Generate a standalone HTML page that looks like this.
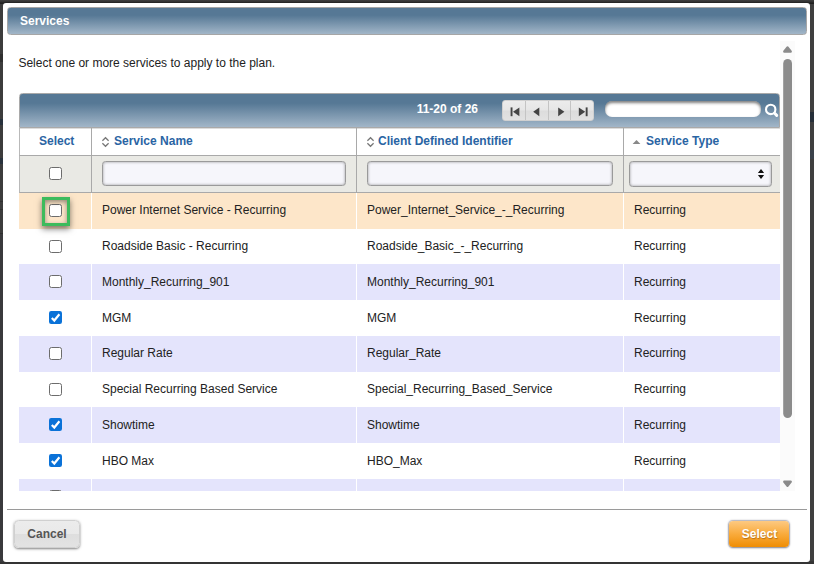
<!DOCTYPE html>
<html lang="en">
<head>
<meta charset="utf-8">
<title>Services</title>
<style>
html,body{margin:0;padding:0;}
body{width:814px;height:564px;overflow:hidden;background:#3c3c3c;position:relative;
  font-family:"Liberation Sans",Arial,sans-serif;font-size:12px;color:#222;}
.abs{position:absolute;}
#dlg{position:absolute;left:3px;top:3px;width:807px;height:559px;background:#fff;border-radius:3px;}
#title{position:absolute;left:7px;top:7px;width:798px;height:26px;border:1px solid #a6a6a6;border-radius:3.5px;
  background:linear-gradient(#567895 0%,#567895 28%,#a2b6c8 100%);}
#title span{position:absolute;left:12px;top:6px;color:#fff;font-weight:bold;font-size:12px;line-height:14px;}
#desc{position:absolute;left:18.4px;top:56px;line-height:14px;font-size:12px;color:#222;white-space:nowrap;}
#thead{position:absolute;left:19px;top:93px;width:759px;height:33px;border:1px solid #a9a9a9;border-radius:3.5px 3.5px 0 0;
  background:linear-gradient(#567895 0%,#567895 28%,#a2b6c8 100%);}
#cols{position:absolute;left:19px;top:128px;width:760px;height:27px;background:#fff;border-left:1px solid #b9b9b9;border-bottom:1px solid #a9a9a9;box-sizing:content-box;}
#filt{position:absolute;left:19px;top:156px;width:760px;height:36px;background:#e9e9e4;border-left:1px solid #b9b9b9;border-bottom:1px solid #a9a9a9;}
.vl{position:absolute;width:1px;background:#a9a9a9;top:128px;height:65px;}
.ch{position:absolute;top:134px;font-weight:bold;font-size:12px;line-height:14px;color:#2a64a3;white-space:nowrap;}
.row{position:absolute;left:19px;width:761px;}
.row .sep{position:absolute;top:0;bottom:0;width:1px;background:#fff;}
.row span{position:absolute;font-size:12px;line-height:14px;color:#222;white-space:nowrap;}
.cb{position:absolute;left:30px;width:11px;height:11px;border:1px solid #6c6c6c;border-radius:2.5px;background:#fff;}
.cb.on{border:0;width:13px;height:13px;border-radius:2.2px;background:#0a72d8;}
.cb.on svg{left:0;top:0;}
.cb svg{position:absolute;left:-1px;top:-1px;}
.inp{position:absolute;top:161px;height:23px;border:1px solid #9a9a9a;border-radius:3.5px;background:#f6f6fb;
  box-shadow:inset 0 0 3px rgba(0,0,0,.38);box-sizing:content-box;}
</style>
</head>
<body>
<div class="abs" style="left:0;top:0;width:814px;height:4px;background:linear-gradient(#3d3d3d 0,#3a3a3a 25%,#232323 70%,#1e1e1e 100%);"></div>
<div class="abs" style="left:0;top:561px;width:814px;height:3px;background:#343434;"></div>
<div class="abs" style="left:0;top:54px;width:3px;height:8px;background:#2f2f2f;"></div>
<div class="abs" style="left:0;top:119px;width:3px;height:6px;background:#27313c;"></div>
<div class="abs" style="left:0;top:158px;width:3px;height:6px;background:#29323c;"></div>
<div class="abs" style="left:0;top:201px;width:3px;height:1px;background:#303030;"></div>
<div class="abs" style="left:0;top:209px;width:3px;height:1px;background:#303030;"></div>
<div class="abs" style="left:0;top:233px;width:3px;height:1px;background:#2e2e2e;"></div>
<div class="abs" style="left:0;top:234px;width:3px;height:328px;background:#39393c;"></div>
<div class="abs" style="left:810px;top:112px;width:4px;height:10px;background:#222b36;"></div>
<div class="abs" style="left:810px;top:150px;width:4px;height:9px;background:#383f48;"></div>
<div class="abs" style="left:810px;top:4px;width:4px;height:558px;background:rgba(255,255,255,.02);"></div>
<div id="dlg"></div>
<div id="title"><span>Services</span></div>
<div id="desc">Select one or more services to apply to the plan.</div>

<div id="thead"></div>
<div id="cols"></div>
<div class="abs" style="left:20px;top:128px;width:760px;height:1px;background:#dcdcdc;"></div>
<div id="filt"></div>
<div class="vl" style="left:91px"></div>
<div class="vl" style="left:356px"></div>
<div class="vl" style="left:623px"></div>

<!-- header bar contents -->
<div class="abs" style="left:415px;top:102px;width:63px;text-align:right;color:#fff;font-weight:bold;font-size:12px;line-height:14px;white-space:nowrap;">11-20 of 26</div>
<div id="pager" class="abs" style="left:502px;top:100px;width:90px;height:19px;border:1px solid #d0d0d0;border-radius:3px;overflow:hidden;
  background:linear-gradient(#ececec 0%,#e6e6e6 49%,#dcdcdc 51%,#e2e2e2 100%);">
  <div class="abs" style="left:22px;top:0;width:1px;height:19px;background:#c4c4c4;"></div>
  <div class="abs" style="left:45px;top:0;width:1px;height:19px;background:#c4c4c4;"></div>
  <div class="abs" style="left:67px;top:0;width:1px;height:19px;background:#c4c4c4;"></div>
  <svg class="abs" style="left:0;top:0.5px" width="90" height="19" viewBox="0 0 90 19">
    <g fill="#444">
      <rect x="7.6" y="5.4" width="1.9" height="8.8"/><path d="M16.4 5.4 L16.4 14.2 L10 9.8 Z"/>
      <path d="M36.3 5.4 L36.3 14.2 L30.2 9.8 Z"/>
      <path d="M55.2 5.4 L55.2 14.2 L61.4 9.8 Z"/>
      <path d="M75.8 5.4 L75.8 14.2 L82.2 9.8 Z"/><rect x="82.7" y="5.4" width="1.9" height="8.8"/>
    </g>
  </svg>
</div>
<div class="abs" style="left:605px;top:101px;width:156px;height:16px;border-radius:7px;background:#fff;box-shadow:inset 0 2px 3px rgba(0,0,0,.5);"></div>
<svg class="abs" style="left:764px;top:102px" width="16" height="16" viewBox="0 0 16 16">
  <circle cx="6.7" cy="7.4" r="4.7" fill="none" stroke="#fff" stroke-width="2.1"/>
  <path d="M10.6 11.3 L12.7 13.4" stroke="#fff" stroke-width="3" stroke-linecap="round"/>
</svg>

<!-- column headers -->
<div class="ch" style="left:39px">Select</div>
<svg class="abs" style="left:101px;top:136px" width="9" height="12" viewBox="0 0 9 12"><path d="M1.4 4.7 L4.5 1.7 L7.6 4.7 M1.4 7.3 L4.5 10.3 L7.6 7.3" fill="none" stroke="#777" stroke-width="1.25"/></svg>
<div class="ch" style="left:114px">Service Name</div>
<svg class="abs" style="left:366px;top:136px" width="9" height="12" viewBox="0 0 9 12"><path d="M1.4 4.7 L4.5 1.7 L7.6 4.7 M1.4 7.3 L4.5 10.3 L7.6 7.3" fill="none" stroke="#777" stroke-width="1.25"/></svg>
<div class="ch" style="left:378px">Client Defined Identifier</div>
<svg class="abs" style="left:632px;top:139px" width="9" height="6" viewBox="0 0 9 6"><path d="M0.6 5 L4.5 1 L8.4 5 Z" fill="#888"/></svg>
<div class="ch" style="left:646px">Service Type</div>

<!-- filter row -->
<div class="cb" style="left:49px;top:167px"></div>
<div class="inp" style="left:102px;width:242px;"></div>
<div class="inp" style="left:367px;width:244px;"></div>
<div class="inp" style="left:629px;width:141px;height:24px;"></div>
<svg class="abs" style="left:757px;top:168.3px" width="8" height="12" viewBox="0 0 8 12"><path d="M0.9 5 L4 0.9 L7.1 5 Z M0.9 7 L4 11.1 L7.1 7 Z" fill="#111"/></svg>

<div id="scroll" style="position:absolute;left:19px;top:193px;width:761px;height:298px;overflow:hidden;">
<div class="row" style="left:0;top:0px;height:36px;background:#fde6c9"><div class="sep" style="left:72px"></div><div class="sep" style="left:337px"></div><div class="sep" style="left:604px"></div><div class="cb" style="top:11px"></div><span style="left:83px;top:10px">Power Internet Service - Recurring</span><span style="left:348px;top:10px">Power_Internet_Service_-_Recurring</span><span style="left:615px;top:10px">Recurring</span></div>
<div class="row" style="left:0;top:36px;height:35px;background:#ffffff"><div class="sep" style="left:72px"></div><div class="sep" style="left:337px"></div><div class="sep" style="left:604px"></div><div class="cb" style="top:11px"></div><span style="left:83px;top:10px">Roadside Basic - Recurring</span><span style="left:348px;top:10px">Roadside_Basic_-_Recurring</span><span style="left:615px;top:10px">Recurring</span></div>
<div class="row" style="left:0;top:71px;height:36px;background:#e4e4fc"><div class="sep" style="left:72px"></div><div class="sep" style="left:337px"></div><div class="sep" style="left:604px"></div><div class="cb" style="top:11px"></div><span style="left:83px;top:11px">Monthly_Recurring_901</span><span style="left:348px;top:11px">Monthly_Recurring_901</span><span style="left:615px;top:11px">Recurring</span></div>
<div class="row" style="left:0;top:107px;height:36px;background:#ffffff"><div class="sep" style="left:72px"></div><div class="sep" style="left:337px"></div><div class="sep" style="left:604px"></div><div class="cb on" style="top:11px"><svg width="13" height="13" viewBox="0 0 13 13"><path d="M2.8 7 L5.3 9.5 L10.4 3.3" fill="none" stroke="#fff" stroke-width="2.2"/></svg></div><span style="left:83px;top:11px">MGM</span><span style="left:348px;top:11px">MGM</span><span style="left:615px;top:11px">Recurring</span></div>
<div class="row" style="left:0;top:143px;height:36px;background:#e4e4fc"><div class="sep" style="left:72px"></div><div class="sep" style="left:337px"></div><div class="sep" style="left:604px"></div><div class="cb" style="top:11px"></div><span style="left:83px;top:10px">Regular Rate</span><span style="left:348px;top:10px">Regular_Rate</span><span style="left:615px;top:10px">Recurring</span></div>
<div class="row" style="left:0;top:179px;height:35px;background:#ffffff"><div class="sep" style="left:72px"></div><div class="sep" style="left:337px"></div><div class="sep" style="left:604px"></div><div class="cb" style="top:11px"></div><span style="left:83px;top:10px">Special Recurring Based Service</span><span style="left:348px;top:10px">Special_Recurring_Based_Service</span><span style="left:615px;top:10px">Recurring</span></div>
<div class="row" style="left:0;top:214px;height:36px;background:#e4e4fc"><div class="sep" style="left:72px"></div><div class="sep" style="left:337px"></div><div class="sep" style="left:604px"></div><div class="cb on" style="top:11px"><svg width="13" height="13" viewBox="0 0 13 13"><path d="M2.8 7 L5.3 9.5 L10.4 3.3" fill="none" stroke="#fff" stroke-width="2.2"/></svg></div><span style="left:83px;top:11px">Showtime</span><span style="left:348px;top:11px">Showtime</span><span style="left:615px;top:11px">Recurring</span></div>
<div class="row" style="left:0;top:250px;height:36px;background:#ffffff"><div class="sep" style="left:72px"></div><div class="sep" style="left:337px"></div><div class="sep" style="left:604px"></div><div class="cb on" style="top:11px"><svg width="13" height="13" viewBox="0 0 13 13"><path d="M2.8 7 L5.3 9.5 L10.4 3.3" fill="none" stroke="#fff" stroke-width="2.2"/></svg></div><span style="left:83px;top:11px">HBO Max</span><span style="left:348px;top:11px">HBO_Max</span><span style="left:615px;top:11px">Recurring</span></div>
<div class="row" style="left:0;top:286px;height:36px;background:#e4e4fc"><div class="sep" style="left:72px"></div><div class="sep" style="left:337px"></div><div class="sep" style="left:604px"></div><div class="cb" style="top:11px"></div></div>
</div>

<!-- green highlight -->
<div class="abs" style="left:42px;top:197px;width:22px;height:23px;border:3px solid #3dbb5c;
  box-shadow:0 3px 6px rgba(0,0,0,.5), inset 0 2px 5px rgba(0,0,0,.42);"></div>

<!-- scrollbar -->
<div class="abs" style="left:780px;top:41px;width:15px;height:450px;background:#fbfbfb;"></div>
<svg class="abs" style="left:780px;top:41px" width="15" height="450" viewBox="0 0 15 450">
  <path d="M7.5 6.5 L10.7 10.5 L4.3 10.5 Z" fill="#8b8b8b" stroke="#8b8b8b" stroke-width="2.4" stroke-linejoin="round"/>
  <rect x="3.2" y="18" width="8.8" height="359" rx="4.4" fill="#8b8b8b"/>
  <path d="M7.5 444.8 L10.7 440.8 L4.3 440.8 Z" fill="#8b8b8b" stroke="#8b8b8b" stroke-width="2.4" stroke-linejoin="round"/>
</svg>

<!-- footer -->
<div class="abs" style="left:7px;top:509px;width:800px;height:1px;background:#9a9a9a;"></div>
<div class="abs" style="left:14px;top:520px;width:64px;height:26px;border:1px solid #d0d0d0;border-radius:4.5px;
  background:linear-gradient(#ececec 0%,#e9e9e9 49%,#dedede 51%,#e3e3e3 100%);box-shadow:0 1px 2.5px rgba(0,0,0,.5);
  text-align:center;font-weight:bold;font-size:12px;line-height:26px;color:#555;">Cancel</div>
<div class="abs" style="left:729px;top:521px;width:60px;height:26px;border-radius:4px;
  background:linear-gradient(#fdc981 0%,#f9ab3c 50%,#ef8d03 100%);box-shadow:0 0 1.5px 0.8px rgba(110,110,125,.55),0 1px 2px rgba(0,0,0,.3);box-sizing:border-box;padding-left:1px;
  text-align:center;font-weight:bold;font-size:12px;line-height:26px;color:#fff;text-shadow:0.5px 1px 1px rgba(120,60,0,.5);">Select</div>

</body>
</html>
